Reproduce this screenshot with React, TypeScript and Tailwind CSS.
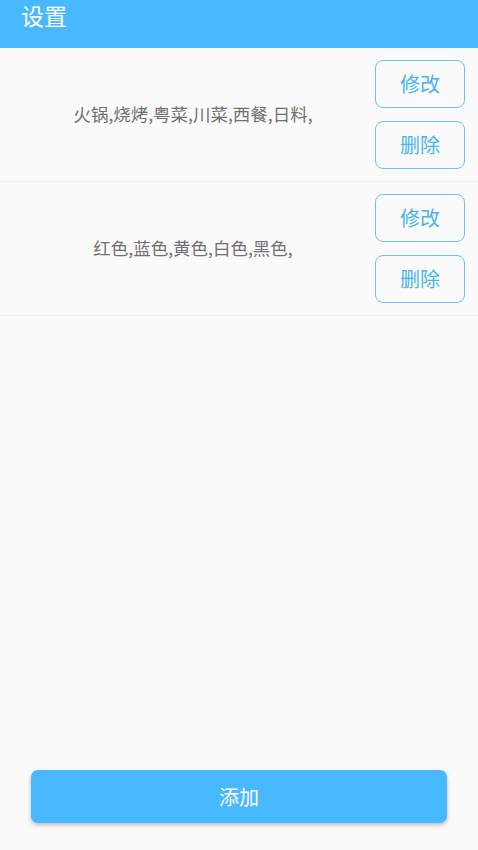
const groups = [
  "火锅,烧烤,粤菜,川菜,西餐,日料,",
  "红色,蓝色,黄色,白色,黑色,",
];

const font = { fontFamily: '"Noto Sans CJK SC", "Noto Sans", sans-serif' };

export default function App() {
  return (
    <div className="flex h-[850px] w-[478px] flex-col bg-[#fafafa]" style={font}>
      {/* Header */}
      <div className="h-[48px] bg-[#48b9fe] pl-[21px] pt-[4px]">
        <div className="text-[23px] leading-[23px] text-white">设置</div>
      </div>

      {/* List */}
      <div className="flex-1">
        {groups.map((g) => (
          <div key={g} className="flex h-[134px] items-center border-b border-[#eeeeee]">
            <div className="flex-1 pl-[11px] text-center text-[17.5px] text-[#707070]">{g}</div>
            <div className="flex flex-col gap-[13px] pr-[13px]">
              <button className="h-[48px] w-[90px] rounded-[8px] border-[1.5px] border-[#66c4f5] text-[20px] text-[#48b3ee]">
                修改
              </button>
              <button className="h-[48px] w-[90px] rounded-[8px] border-[1.5px] border-[#66c4f5] text-[20px] text-[#48b3ee]">
                删除
              </button>
            </div>
          </div>
        ))}
      </div>

      {/* Add button */}
      <div className="px-[31px] pb-[27px]">
        <button className="h-[53px] w-full rounded-[7px] bg-[#48b9fe] text-[20px] text-white shadow-[0_2px_4px_rgba(0,0,0,0.25)]">
          添加
        </button>
      </div>
    </div>
  );
}
